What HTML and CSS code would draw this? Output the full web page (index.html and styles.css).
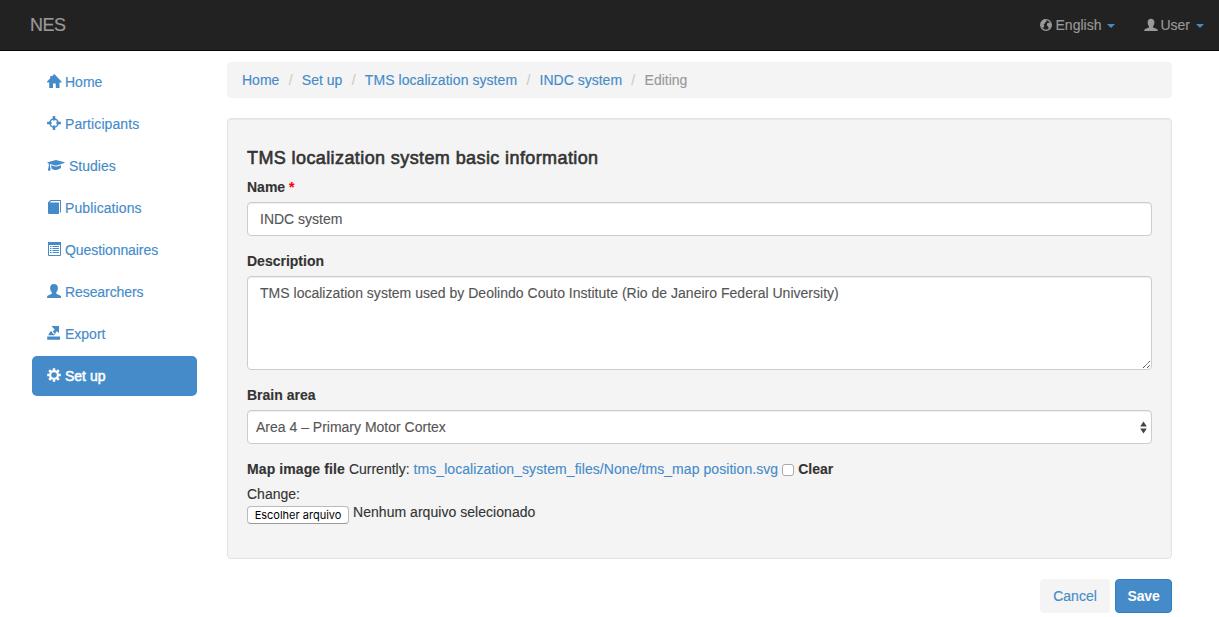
FILE: index.html
```html
<!DOCTYPE html>
<html lang="en">
<head>
<meta charset="utf-8">
<title>NES</title>
<link rel="stylesheet" href="styles.css">
</head>
<body>
<header class="navbar">
  <a class="brand">NES</a>
  <nav class="navbar-menu">
    <a class="menu-item english"><svg class="icon globe" viewBox="0 0 14 14"><circle cx="7" cy="7" r="5.300" fill="none" stroke="currentColor" stroke-width="1.300"/><path fill="currentColor" d="M1.600 7.500 2 4l2.500-2.400 3.300-.3-.8 1.400.8.8-1.700 1-.3 1.200-1.500.5 1 .8-.5 2.200-1 .8zM8 5.600l2-1.200 2 1.200.5 2-1.300 3-1.500.7-.3-2.400-1.400-1.300z"/></svg><span>English</span><i class="caret"></i></a>
    <a class="menu-item user"><svg class="icon" viewBox="0 0 14 14"><path fill="currentColor" d="M7 .8c2.100 0 3.400 1.300 3.400 3.500 0 1.700-.6 3-1.300 3.900v1.200l3.800 1.600c.6.300.8.700.8 1.200v.8H.3v-.8c0-.5.2-.9.8-1.200l3.800-1.600V8.200C4.200 7.300 3.600 6 3.600 4.300 3.600 2.100 4.900.8 7 .8z"/></svg><span>User</span><i class="caret"></i></a>
  </nav>
</header>
<div class="page">
  <nav class="sidebar">
    <a class="side-link"><svg class="icon home" viewBox="0 0 14 14"><path fill="currentColor" d="M7.300 0 14.500 7.400v1H12.500v5.600H8.800V9.500H6v4.500H2.200V8.400H.1v-1L3.200 4.200V2h1.600v.6z"/></svg><span>Home</span></a>
    <a class="side-link"><svg class="icon" viewBox="0 0 14 14"><g fill="none" stroke="currentColor"><path stroke-width="2.400" d="M7 .1v4.500M7 9.400v4.500M.1 7h4.500M9.400 7h4.500"/><circle cx="7" cy="7" r="4.100" stroke-width="1.500"/></g></svg><span class="t-participants">Participants</span></a>
    <a class="side-link"><svg class="icon cap" viewBox="0 0 18 14"><path fill="currentColor" d="M9 2l8.500 2.300v.8L9.600 7.500H8.300L3 5.900v2l.6 3.300-.4 1.600H1.300L1 11.200l.8-3.300V5.500L.5 5.100v-.8zM4 7.300l4.600 1.300h1L14 7.300v2.500C12.500 11.100 10.700 12 9 12s-3.200-.5-4.400-1.600z"/></svg><span>Studies</span></a>
    <a class="side-link"><svg class="icon" viewBox="0 0 14 14"><path fill="currentColor" d="M1 2.500 3.500 0H14v12l-1 .9V1H4L3 2.500h9V14H2.500C1.500 14 1 13.500 1 12.700z"/></svg><span class="t-publications">Publications</span></a>
    <a class="side-link"><svg class="icon" viewBox="0 0 14 14"><path fill="none" stroke="currentColor" d="M1.500 .5h12v13h-12z"/><path fill="currentColor" d="M1 0h13v3H1z"/><path stroke="currentColor" d="M3 4.500h1.500M5.500 4.500H12M3 6.500h1.500M5.500 6.500H12M3 8.500h1.500M5.500 8.500H12M3 10.500h1.500M5.500 10.500H12"/></svg><span class="t-narrow">Questionnaires</span></a>
    <a class="side-link"><svg class="icon" viewBox="0 0 14 14"><path fill="currentColor" d="M7 .1c2.300 0 3.900 1.500 3.900 3.800 0 1.900-.6 3.200-1.600 4.200v1.600l3.800 1.700c.6.300.9.700.9 1.200V14H.1v-1.400c0-.5.3-.9.900-1.200l3.800-1.700V8.100C3.800 7.100 3.100 5.800 3.100 3.900 3.100 1.600 4.700.1 7 .1z"/></svg><span class="t-narrow">Researchers</span></a>
    <a class="side-link"><svg class="icon" viewBox="0 0 14 14"><path fill="currentColor" d="M.2 10.500h12.900v3.200H.2zM4.500 0H12v7L10 5.300 8.300 6.900l.8.9H7.800L6.100 6v-.8l1.600-1.700-1.700-1.700zM5 6.300 6.700 8.300H8l-.5 1H1.200l1.600-3 1.400-1.500z"/></svg><span>Export</span></a>
    <a class="side-link active"><svg class="icon" viewBox="0 0 14 14"><g fill="none" stroke="currentColor"><circle cx="7" cy="7" r="3.900" stroke-width="2.200"/><path stroke-width="2.500" d="M7 .2v2.300M7 11.500v2.300M.2 7h2.300M11.500 7h2.300M2.200 2.200l1.600 1.600M10.200 10.200l1.600 1.600M11.800 2.200l-1.600 1.600M3.800 10.200l-1.600 1.600"/></g></svg><span>Set up</span></a>
  </nav>
  <main class="content">
    <ol class="breadcrumb">
      <li><a>Home</a></li>
      <li><a>Set up</a></li>
      <li><a class="t-crumb">TMS localization system</a></li>
      <li><a>INDC system</a></li>
      <li class="current">Editing</li>
    </ol>
    <form class="form">
      <section class="well">
        <h4 class="title">TMS localization system basic information</h4>
        <label class="label" for="name">Name <span class="required">*</span></label>
        <input class="control" id="name" type="text" value="INDC system">
        <label class="label" for="description">Description</label>
        <div class="area-wrap">
          <textarea class="control area" id="description">TMS localization system used by Deolindo Couto Institute (Rio de Janeiro Federal University)</textarea>
          <svg class="grip" viewBox="0 0 9 9"><path stroke="#333" stroke-dasharray="1.200 .5" d="M1 8 8 1M5 8 8 5"/></svg>
        </div>
        <label class="label">Brain area</label>
        <div class="control select"><span>Area 4 – Primary Motor Cortex</span><svg class="updown" viewBox="0 0 7 13"><path fill="#444" d="M3.500 .5 6.800 5.500H.2zM.2 7.500h6.600l-3.300 5z"/></svg></div>
        <div class="file-row"><b class="t-map">Map image file</b><span class="t-currently">Currently:</span><a class="t-file">tms_localization_system_files/None/tms_map position.svg</a><input class="check" type="checkbox"><b>Clear</b></div>
        <div class="change">Change:</div>
        <div class="upload"><button class="choose" type="button">Escolher arquivo</button><span class="t-none">Nenhum arquivo selecionado</span></div>
      </section>
      <div class="actions"><a class="btn cancel">Cancel</a><a class="btn save">Save</a></div>
    </form>
  </main>
</div>
</body>
</html>
```
FILE: styles.css
```css
* { box-sizing: border-box; }
body {
  margin: 0;
  height: 617px;
  overflow: hidden;
  background: #fff;
  color: #333;
  font: 14px/20px "Liberation Sans", Arial, sans-serif;
}
a { color: #458bc9; text-decoration: none; }
.navbar {
  height: 51px;
  padding: 0 15px 0 30px;
  display: flex;
  justify-content: space-between;
  background: #222;
  border-bottom: 1px solid #080808;
}
.brand { color: #999; font-size: 18px; line-height: 50px; letter-spacing: -.5px; -webkit-text-stroke: .2px; }
.navbar-menu { display: flex; gap: 29px; }
.menu-item { display: flex; align-items: center; color: #999; height: 50px; -webkit-text-stroke: .15px; }
.menu-item .icon { margin-right: 2px; }
.menu-item .globe { margin-right: 3px; }
.caret {
  margin-left: 6px;
  margin-top: 2px;
  border: 4px solid transparent;
  border-top-color: #458bc9;
  border-bottom: 0;
}
.icon { width: 14px; height: 14px; flex: none; }
.page { display: flex; padding: 11px 47px 0 32px; gap: 30px; }
.sidebar { width: 165px; display: flex; flex-direction: column; gap: 2px; }
.side-link {
  height: 40px;
  padding: 0 15px;
  display: flex;
  align-items: center;
  gap: 4px;
  border-radius: 5px;
  -webkit-text-stroke: .15px;
}
.side-link .icon { margin-top: -2px; overflow: visible; }
.side-link .cap { width: 18px; }
.side-link.active { background: #458bc9; color: #fff; -webkit-text-stroke: .5px; }
.t-participants, .t-publications { letter-spacing: .1px; }
.t-narrow { letter-spacing: -.08px; }
.content { flex: 1; }
.breadcrumb {
  margin: 0 0 20px;
  padding: 8px 15px;
  height: 36px;
  display: flex;
  list-style: none;
  background: #f4f4f4;
  border-radius: 4px;
  -webkit-text-stroke: .15px;
}
.breadcrumb li + li::before { content: "/"; color: #ccc; padding: 0 9.3px; }
.t-crumb { letter-spacing: .06px; }
.current { color: #999; }
.well {
  height: 441px;
  padding: 29px 19px 0;
  background: #f4f4f4;
  border: 1px solid #e3e3e3;
  border-radius: 4px;
  box-shadow: inset 0 1px 1px rgba(0,0,0,.05);
  -webkit-text-stroke: .12px;
}
.title { margin: 0 0 9px; font-size: 18px; line-height: 20px; font-weight: 400; letter-spacing: .4px; -webkit-text-stroke: .6px; }
.label { display: block; height: 20px; margin-bottom: 5px; font-weight: 700; }
.required { color: red; }
.control {
  display: block;
  width: 100%;
  height: 34px;
  margin: 0 0 15px;
  padding: 6px 12px;
  font: inherit;
  color: #555;
  background: #fff;
  border: 1px solid #ccc;
  border-radius: 4px;
  box-shadow: inset 0 1px 1px rgba(0,0,0,.075);
  outline: 0;
}
.area-wrap { position: relative; }
.area { height: 94px; resize: none; overflow: hidden; letter-spacing: .015px; }
.grip { position: absolute; right: 1px; bottom: 1px; width: 9px; height: 9px; }
.select { display: flex; align-items: center; justify-content: space-between; padding: 0 4px 0 8px; }
.updown { width: 7px; height: 13px; }
.file-row { display: flex; height: 20px; gap: 4px; }
.t-map { letter-spacing: .1px; }
.t-file { letter-spacing: .065px; }
.check {
  appearance: none;
  width: 12px;
  height: 12px;
  margin: 5px 0 0;
  background: #fff;
  border: 1px solid #aaa;
  border-radius: 3px;
}
.change { margin-top: 5px; height: 20px; }
.upload { display: flex; gap: 4px; line-height: 16px; }
.t-none { letter-spacing: .04px; }
.choose {
  width: 102px;
  height: 18px;
  margin-top: 2px;
  padding: 1px 0 0;
  font: 11px/15px Inter, sans-serif;
  color: #000;
  -webkit-text-stroke: 0;
  background: #fff;
  border: 1px solid #bbb;
  border-bottom-color: #999;
  border-radius: 4px;
}
.actions { display: flex; justify-content: flex-end; gap: 5px; margin-top: 20px; }
.btn { height: 34px; line-height: 34px; text-align: center; border-radius: 4px; }
.cancel { width: 70px; background: #f4f4f4; -webkit-text-stroke: .15px; }
.save { width: 57px; background: #458bc9; color: #fff; font-weight: 700; border: 1px solid #357ebd; line-height: 32px; letter-spacing: -.15px; }
```
